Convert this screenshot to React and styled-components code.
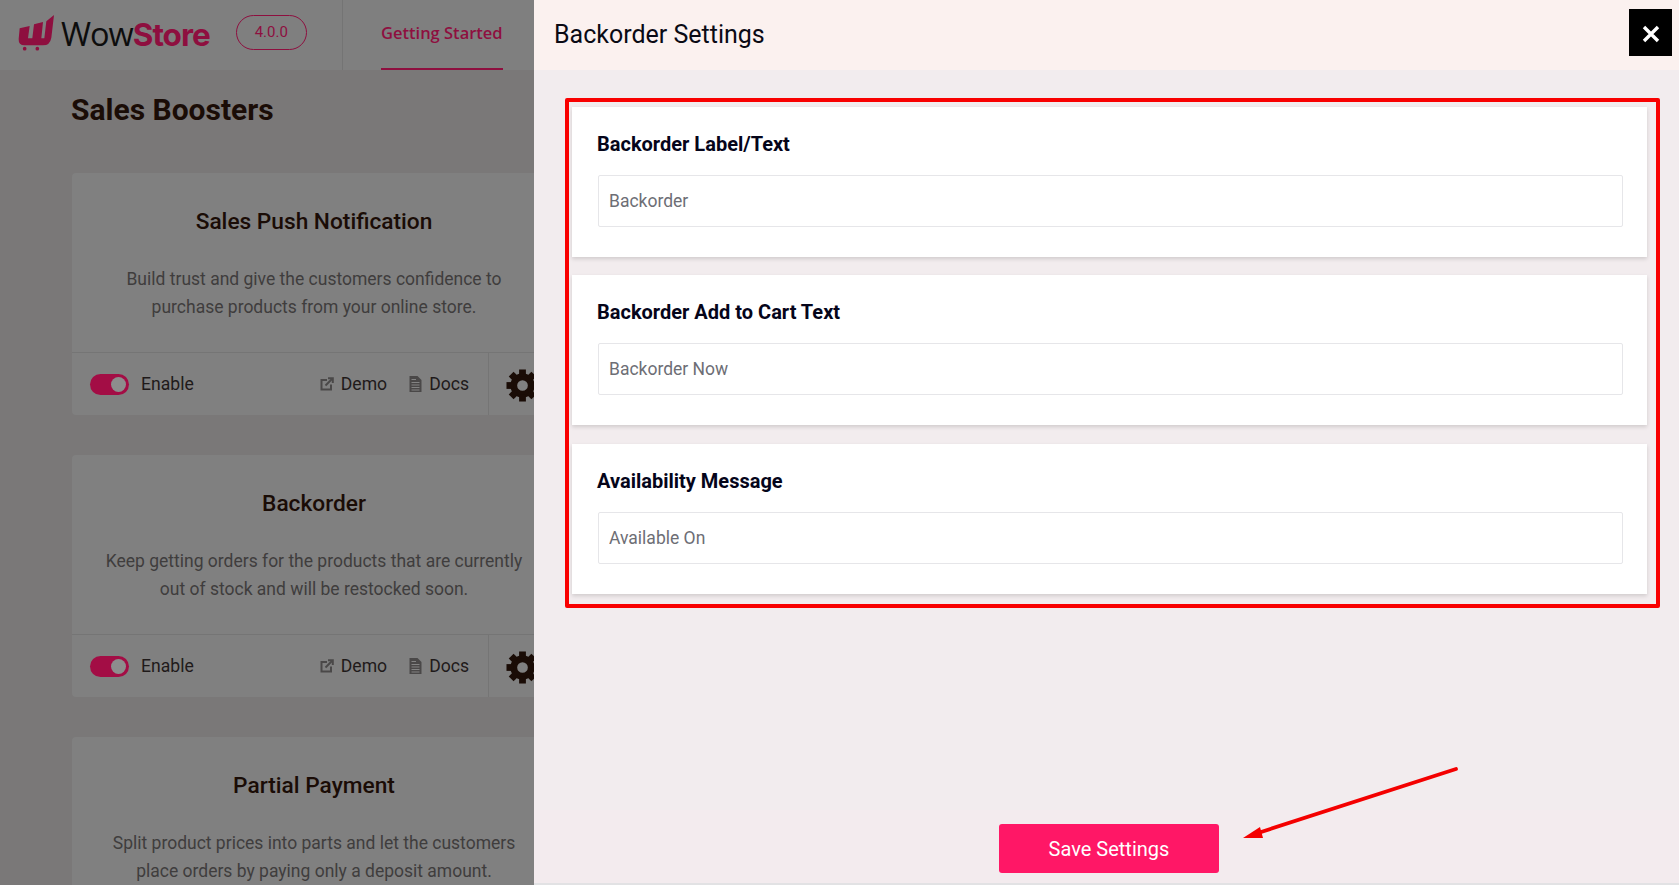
import React from "react";
import styled, { createGlobalStyle } from "styled-components";

const GlobalStyle = createGlobalStyle`
  html, body {
    margin: 0;
    padding: 0;
    height: 100%;
    overflow: hidden;
    font-family: Roboto, "Liberation Sans", sans-serif;
  }
`;

const Page = styled.div`
  display: flex;
  width: 1679px;
  height: 885px;
  overflow: hidden;
`;

const Backdrop = styled.div`
  width: 534px;
  flex: none;
  overflow: hidden;
  background: #7a7878;
`;

const TopBar = styled.header`
  display: flex;
  align-items: stretch;
  height: 70px;
  background: #7f7f7f;
`;

const Brand = styled.div`
  display: flex;
  align-items: center;
  width: 343px;
  flex: none;
  box-sizing: border-box;
  padding: 0 0 4px 18px;
  border-right: 1px solid #747474;
`;

const BrandName = styled.span`
  margin-left: 6px;
  font-family: "Open Sans", sans-serif;
  font-size: 32.5px;
  letter-spacing: -1px;
  color: #0d0d0d;

  b {
    font-family: Inter, sans-serif;
    font-weight: 700;
    font-size: 31.5px;
    color: #8e0f3f;
  }
`;

const Version = styled.span`
  margin: -2px 0 0 26px;
  display: flex;
  align-items: center;
  justify-content: center;
  width: 71px;
  height: 35px;
  box-sizing: border-box;
  border: 1px solid #8e0f3f;
  border-radius: 18px;
  font-size: 15px;
  color: #8e0f3f;
`;

const NavLink = styled.a`
  margin-left: 38px;
  display: flex;
  align-items: center;
  box-sizing: border-box;
  height: 70px;
  padding-bottom: 3px;
  border-bottom: 2px solid #8e0f3f;
  font-family: "Open Sans", sans-serif;
  font-weight: 600;
  font-size: 16.5px;
  color: #8e0f3f;
`;

const Content = styled.main`
  padding: 20px 0 0 71px;
`;

const Heading = styled.h1`
  margin: 0 0 44px;
  font-size: 30px;
  line-height: 39px;
  font-weight: 700;
  color: #1a0c06;
`;

const Card = styled.section`
  width: 484px;
  height: 242px;
  margin: 0 0 40px 1px;
  display: flex;
  flex-direction: column;
  border-radius: 4px;
  background: #808080;
`;

const CardBody = styled.div`
  flex: 1;
  padding: 34px 10px 0;
  text-align: center;
`;

const CardTitle = styled.h3`
  margin: 0 0 28px;
  font-size: 22.7px;
  line-height: 30px;
  font-weight: 500;
  color: #1a0c06;
`;

const CardText = styled.p`
  margin: 0;
  font-size: 17.5px;
  line-height: 28px;
  color: #3f3d3d;
`;

const CardFooter = styled.div`
  display: flex;
  align-items: center;
  flex: none;
  height: 63px;
  box-sizing: border-box;
  padding-left: 18px;
  border-top: 1px solid #757575;
  font-size: 17.6px;
  color: #1f1a1a;
`;

const Toggle = styled.span`
  position: relative;
  width: 39px;
  height: 21px;
  border-radius: 11px;
  background: #a30d45;

  &::after {
    content: "";
    position: absolute;
    top: 3px;
    right: 3px;
    width: 15px;
    height: 15px;
    border-radius: 50%;
    background: #8d8d8d;
  }
`;

const ToggleLabel = styled.span`
  margin-left: 12px;
`;

const FooterLinks = styled.div`
  margin-left: auto;
  display: flex;
  align-items: center;
  gap: 22px;
  height: 100%;
  padding-right: 19px;
`;

const FooterLink = styled.span`
  display: flex;
  align-items: center;
  gap: 7px;
`;

const GearCell = styled.div`
  display: flex;
  align-items: center;
  width: 68px;
  flex: none;
  height: 100%;
  box-sizing: border-box;
  padding: 2px 0 0 17px;
  border-left: 1px solid #757575;
  color: #1a0c06;
`;

const Drawer = styled.aside`
  position: relative;
  flex: 1;
  display: flex;
  flex-direction: column;
  min-width: 0;
  background: #f2ecee;
`;

const DrawerHeader = styled.div`
  display: flex;
  align-items: center;
  justify-content: space-between;
  height: 70px;
  flex: none;
  padding: 0 7px 0 20px;
  background: #fbf1ef;
`;

const DrawerTitle = styled.h2`
  margin: -2px 0 0;
  font-size: 25px;
  font-weight: 400;
  color: #0a0a14;
`;

const CloseButton = styled.button`
  display: flex;
  align-items: center;
  justify-content: center;
  width: 43px;
  height: 47px;
  padding: 3px 0 0;
  margin-top: -5px;
  border: none;
  background: #000;
`;

const DrawerBody = styled.div`
  flex: 1;
  padding: 28px 19px 0 31px;
`;

const Highlight = styled.div`
  display: flex;
  flex-direction: column;
  gap: 18.4px;
  box-sizing: border-box;
  height: 510px;
  padding: 5px 9px 0 3px;
  border: 4px solid #f90000;
  border-radius: 2px;
`;

const FieldCard = styled.div`
  height: 150px;
  flex: none;
  box-sizing: border-box;
  padding: 24px 24px 0 26px;
  background: #fff;
  box-shadow: 0 2px 4px rgba(0, 0, 0, 0.14);
`;

const FieldLabel = styled.label`
  display: block;
  margin: 0 0 18px -1px;
  font-size: 20px;
  line-height: 26px;
  font-weight: 700;
  color: #05051a;
`;

const FieldInput = styled.input`
  display: block;
  width: 100%;
  height: 52px;
  box-sizing: border-box;
  padding: 0 10px;
  border: 1px solid #e6e6e9;
  border-radius: 2px;
  font-family: inherit;
  font-size: 17.5px;
  color: #6d6e75;

  &::placeholder {
    color: #6d6e75;
    opacity: 1;
  }
`;

const DrawerFooter = styled.div`
  display: flex;
  justify-content: center;
  flex: none;
  height: 75px;
  box-sizing: border-box;
  padding: 14px 0 0 5px;
  background: #f3ebee;
  border-bottom: 2px solid #e2e2e4;
`;

const SaveButton = styled.button`
  width: 220px;
  height: 49px;
  border: none;
  border-radius: 3px;
  background: #ff1766;
  color: #fff;
  font-family: inherit;
  font-size: 20px;
`;

const Arrow = styled.svg`
  position: absolute;
  left: 700px;
  top: 760px;
`;

const boosters = [
  {
    title: "Sales Push Notification",
    lines: ["Build trust and give the customers confidence to", "purchase products from your online store."],
    footer: true,
  },
  {
    title: "Backorder",
    lines: ["Keep getting orders for the products that are currently", "out of stock and will be restocked soon."],
    footer: true,
  },
  {
    title: "Partial Payment",
    lines: ["Split product prices into parts and let the customers", "place orders by paying only a deposit amount."],
    footer: false,
  },
];

const fields = [
  { label: "Backorder Label/Text", value: "Backorder" },
  { label: "Backorder Add to Cart Text", value: "Backorder Now" },
  { label: "Availability Message", value: "Available On" },
];

const Logo = () => (
  <svg width="37" height="37" viewBox="25 28 111 111">
    <path
      fill="#8e0f3f"
      d="M30 68 L60 61 L55 98 L68 98 L73 56 L100 49 L95 98 L104 98 L110 47 L133 28 L125 96 Q121 119 100 119 L45 119 Q26 119 27 100 Z"
    />
    <circle cx="45" cy="129" r="5.5" fill="#8e0f3f" />
    <circle cx="83" cy="129" r="5.5" fill="#8e0f3f" />
  </svg>
);

const ExternalIcon = () => (
  <svg width="14" height="14" viewBox="0 0 14 14" fill="none" stroke="#4a4848" strokeWidth="2">
    <path d="M7 3 H1.5 V12.5 H11 V7.5" />
    <path d="M5.5 8.5 L12 2" />
    <path d="M8 1.2 H12.8 V6" />
  </svg>
);

const DocIcon = () => (
  <svg width="13" height="16" viewBox="0 0 13 16">
    <path fill="#4a4848" d="M0.5 0 H8.5 L12.5 4 V16 H0.5 Z" />
    <path stroke="#8a8a8a" strokeWidth="0.9" d="M2.5 3.5 H7 M2.5 6.5 H10.5 M2.5 9 H10.5 M2.5 11.5 H10.5 M2.5 14 H10.5" />
  </svg>
);

const GearIcon = () => (
  <svg width="33" height="33" viewBox="0 0 34 34" fill="currentColor">
    <circle cx="17" cy="17" r="9" fill="none" stroke="currentColor" strokeWidth="7" />
    {[0, 45, 90, 135, 180, 225, 270, 315].map((a) => (
      <rect key={a} x="13.5" y="0.5" width="7" height="7" transform={`rotate(${a} 17 17)`} />
    ))}
  </svg>
);

export default function App() {
  return (
    <Page>
      <GlobalStyle />
      <Backdrop>
        <TopBar>
          <Brand>
            <Logo />
            <BrandName>
              Wow<b>Store</b>
            </BrandName>
            <Version>4.0.0</Version>
          </Brand>
          <NavLink>Getting Started</NavLink>
        </TopBar>
        <Content>
          <Heading>Sales Boosters</Heading>
          {boosters.map((b) => (
            <Card key={b.title}>
              <CardBody>
                <CardTitle>{b.title}</CardTitle>
                <CardText>
                  {b.lines[0]}
                  <br />
                  {b.lines[1]}
                </CardText>
              </CardBody>
              {b.footer && (
                <CardFooter>
                  <Toggle />
                  <ToggleLabel>Enable</ToggleLabel>
                  <FooterLinks>
                    <FooterLink>
                      <ExternalIcon />
                      Demo
                    </FooterLink>
                    <FooterLink>
                      <DocIcon />
                      Docs
                    </FooterLink>
                  </FooterLinks>
                  <GearCell>
                    <GearIcon />
                  </GearCell>
                </CardFooter>
              )}
            </Card>
          ))}
        </Content>
      </Backdrop>
      <Drawer>
        <DrawerHeader>
          <DrawerTitle>Backorder Settings</DrawerTitle>
          <CloseButton>
            <svg width="18" height="18" viewBox="0 0 18 18">
              <path d="M2 2 L16 16 M16 2 L2 16" stroke="#fff" strokeWidth="3.4" />
            </svg>
          </CloseButton>
        </DrawerHeader>
        <DrawerBody>
          <Highlight>
            {fields.map((f) => (
              <FieldCard key={f.label}>
                <FieldLabel>{f.label}</FieldLabel>
                <FieldInput placeholder={f.value} readOnly />
              </FieldCard>
            ))}
          </Highlight>
        </DrawerBody>
        <DrawerFooter>
          <SaveButton>Save Settings</SaveButton>
        </DrawerFooter>
        <Arrow width="230" height="90" viewBox="0 0 230 90">
          <path d="M222 9 L24 73" stroke="#f40000" strokeWidth="3.8" strokeLinecap="round" />
          <path d="M9 78 L26 67 L29 78 Z" fill="#f40000" />
        </Arrow>
      </Drawer>
    </Page>
  );
}
